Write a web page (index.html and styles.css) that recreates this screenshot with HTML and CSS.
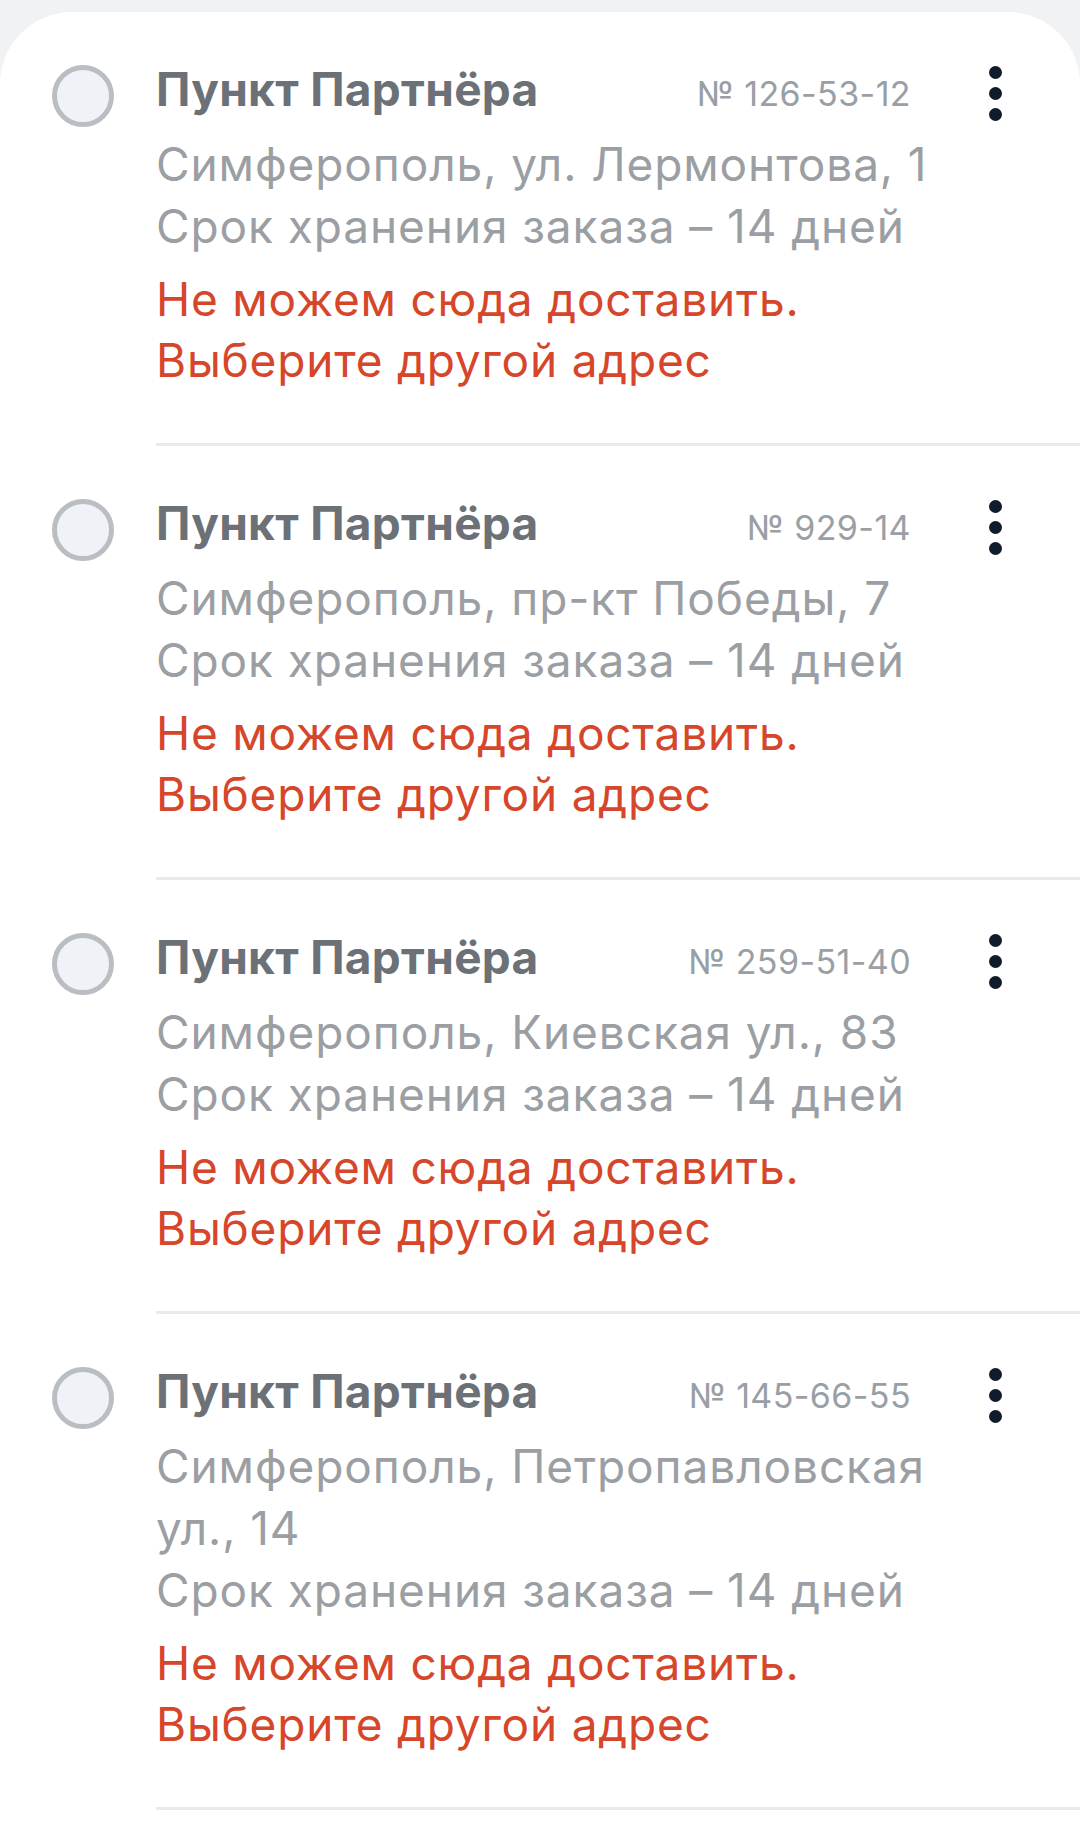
FILE: index.html
```html
<!DOCTYPE html>
<html lang="ru">
<head>
  <meta charset="UTF-8">
  <meta name="viewport" content="width=device-width, initial-scale=1.0">
  <title>Пункты выдачи</title>
  <link rel="stylesheet" href="styles.css">
</head>
<body>
  <div class="sheet">
    <ul class="point-list">
      <li class="point">
        <span class="radio"></span>
        <div class="point-main">
          <div class="info">
            <div class="point-head">
              <span class="point-name">Пункт Партнёра</span>
              <span class="point-code">№ 126-53-12</span>
            </div>
            <div class="point-address">Симферополь, ул. Лермонтова, 1</div>
            <div class="point-term">Срок хранения заказа – 14 дней</div>
            <div class="point-warning">Не можем сюда доставить.<br>Выберите другой адрес</div>
          </div>
          <button class="menu"><i></i><i></i><i></i></button>
        </div>
      </li>
      <li class="point">
        <span class="radio"></span>
        <div class="point-main">
          <div class="info">
            <div class="point-head">
              <span class="point-name">Пункт Партнёра</span>
              <span class="point-code">№ 929-14</span>
            </div>
            <div class="point-address">Симферополь, пр-кт Победы, 7</div>
            <div class="point-term">Срок хранения заказа – 14 дней</div>
            <div class="point-warning">Не можем сюда доставить.<br>Выберите другой адрес</div>
          </div>
          <button class="menu"><i></i><i></i><i></i></button>
        </div>
      </li>
      <li class="point">
        <span class="radio"></span>
        <div class="point-main">
          <div class="info">
            <div class="point-head">
              <span class="point-name">Пункт Партнёра</span>
              <span class="point-code">№ 259-51-40</span>
            </div>
            <div class="point-address">Симферополь, Киевская ул., 83</div>
            <div class="point-term">Срок хранения заказа – 14 дней</div>
            <div class="point-warning">Не можем сюда доставить.<br>Выберите другой адрес</div>
          </div>
          <button class="menu"><i></i><i></i><i></i></button>
        </div>
      </li>
      <li class="point">
        <span class="radio"></span>
        <div class="point-main">
          <div class="info">
            <div class="point-head">
              <span class="point-name">Пункт Партнёра</span>
              <span class="point-code">№ 145-66-55</span>
            </div>
            <div class="point-address">Симферополь, Петропавловская ул., 14</div>
            <div class="point-term">Срок хранения заказа – 14 дней</div>
            <div class="point-warning">Не можем сюда доставить.<br>Выберите другой адрес</div>
          </div>
          <button class="menu"><i></i><i></i><i></i></button>
        </div>
      </li>
    </ul>
  </div>
</body>
</html>
```

FILE: styles.css
```css
body {
  margin: 0;
  padding: 12px 0 0;
  background-color: #f1f2f4;
  font-family: Inter, "Noto Sans", sans-serif;
}
.sheet {
  background-color: #fff;
  border-radius: 72px 72px 0 0;
  min-height: 1823px;
}
.point-list {
  list-style-type: none;
  margin: 0;
  padding: 0;
}
.point {
  display: flex;
  padding-left: 52px;
}
.radio {
  flex-shrink: 0;
  width: 52px;
  height: 52px;
  margin-top: 53px;
  border: 5px solid #babec3;
  border-radius: 50%;
  background-color: #eff2f7;
}
.point-main {
  flex-grow: 1;
  display: flex;
  margin-left: 42px;
  padding: 51px 78px 52px 0;
  border-bottom: 3px solid #e8eaed;
}
.info {
  flex-grow: 1;
}
.point-head {
  display: flex;
  justify-content: space-between;
  align-items: baseline;
  padding-right: 38px;
  line-height: 52px;
}
.point-name {
  font-size: 46px;
  font-weight: 700;
  letter-spacing: 0.3px;
  color: #6b7177;
}
.point-code {
  font-size: 34px;
  letter-spacing: 0.4px;
  color: #9a9fa5;
}
.point-address {
  margin-top: 13px;
}
.point-address,
.point-term {
  font-size: 46px;
  line-height: 62px;
  letter-spacing: 0.9px;
  color: #9b9fa4;
}
.point-warning {
  margin-top: 12px;
  font-size: 46px;
  line-height: 61px;
  letter-spacing: 0.8px;
  color: #d6462a;
}
.menu {
  flex-shrink: 0;
  display: flex;
  flex-direction: column;
  align-items: center;
  gap: 8px;
  width: 14px;
  height: 60px;
  margin: 3px 0 0 39px;
  padding: 0;
  border: none;
  background: none;
}
.menu i {
  width: 13px;
  height: 13px;
  border-radius: 50%;
  background-color: #0f1c2b;
}
```
